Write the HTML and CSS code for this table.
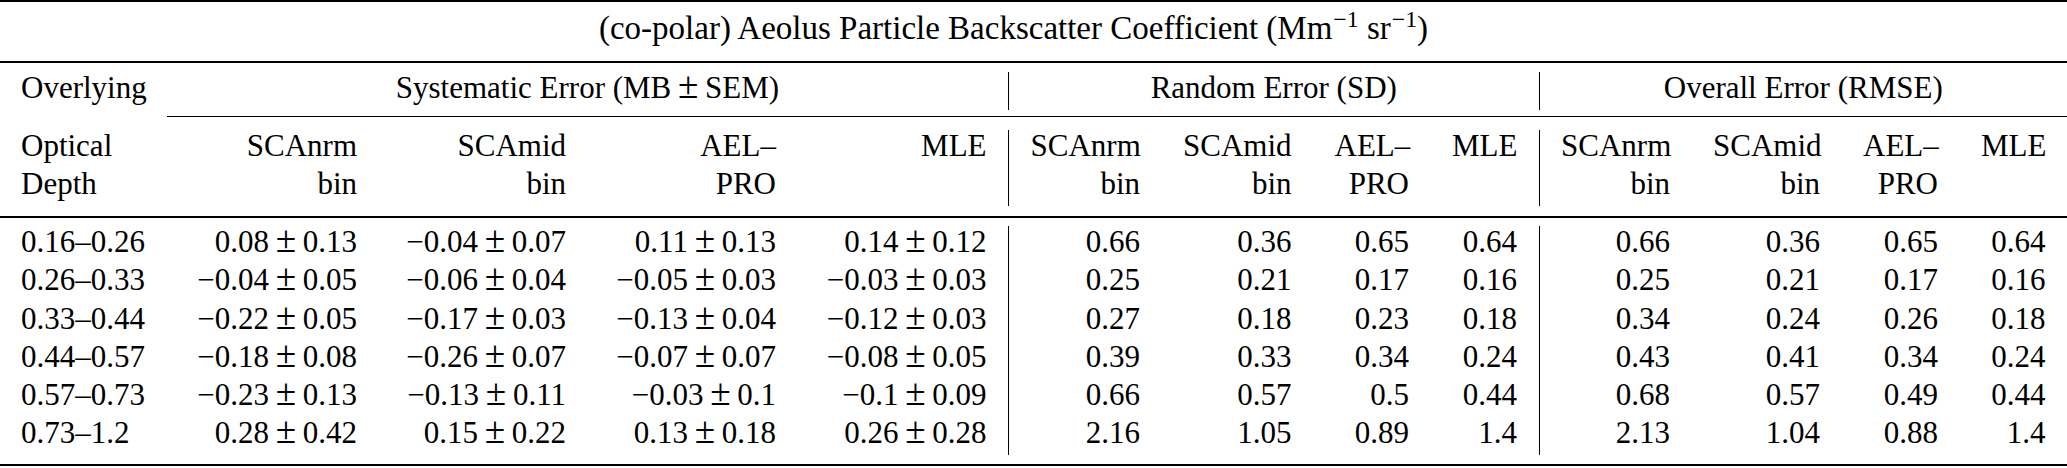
FILE: index.html
```html
<!DOCTYPE html>
<html lang="en">
<head>
<meta charset="utf-8">
<title>Aeolus Particle Backscatter Coefficient errors</title>
<link rel="stylesheet" href="styles.css">
</head>
<body>
<table class="tbl">
  <colgroup>
    <col class="w-stub">
    <col class="w-s1"><col class="w-s2"><col class="w-s3"><col class="w-s4">
    <col class="w-r1"><col class="w-r2"><col class="w-r3"><col class="w-r4">
    <col class="w-o1"><col class="w-o2"><col class="w-o3"><col class="w-o4">
  </colgroup>
  <tbody>
    <tr class="rule rule-heavy"><td colspan="13"></td></tr>
    <tr class="sp sp-a"><td colspan="13"></td></tr>
    <tr class="row"><td colspan="13" class="cap">(co-polar) Aeolus Particle Backscatter Coefficient (Mm<sup class="sup">−1</sup> sr<sup class="sup">−1</sup>)</td></tr>
    <tr class="sp sp-b"><td colspan="13"></td></tr>
    <tr class="rule rule-light"><td colspan="13"></td></tr>
    <tr class="sp sp-c"><td colspan="13"></td></tr>
    <tr class="row">
      <td class="stub">Overlying</td>
      <td colspan="4" class="span">Systematic Error (MB<span class="pm">±</span>SEM)</td>
      <td colspan="4" class="span bar">Random Error (SD)</td>
      <td colspan="4" class="span bar">Overall Error (RMSE)</td>
    </tr>
    <tr class="sp sp-d"><td colspan="13"></td></tr>
    <tr class="rule rule-cmid"><td class="blank"></td><td colspan="12"></td></tr>
    <tr class="sp sp-e"><td colspan="13"></td></tr>
    <tr class="row">
      <td class="stub">Optical</td>
      <td>SCAnrm</td><td>SCAmid</td><td>AEL–</td><td>MLE</td>
      <td class="bar">SCAnrm</td><td>SCAmid</td><td>AEL–</td><td>MLE</td>
      <td class="bar">SCAnrm</td><td>SCAmid</td><td>AEL–</td><td>MLE</td>
    </tr>
    <tr class="row">
      <td class="stub">Depth</td>
      <td>bin</td><td>bin</td><td>PRO</td><td></td>
      <td class="bar">bin</td><td>bin</td><td>PRO</td><td></td>
      <td class="bar">bin</td><td>bin</td><td>PRO</td><td></td>
    </tr>
    <tr class="sp sp-f"><td colspan="13"></td></tr>
    <tr class="rule rule-light"><td colspan="13"></td></tr>
    <tr class="sp sp-g"><td colspan="13"></td></tr>
    <tr class="row">
      <td class="stub">0.16–0.26</td>
      <td>0.08<span class="pm">±</span>0.13</td><td>−0.04<span class="pm">±</span>0.07</td><td>0.11<span class="pm">±</span>0.13</td><td>0.14<span class="pm">±</span>0.12</td>
      <td class="bar">0.66</td><td>0.36</td><td>0.65</td><td>0.64</td>
      <td class="bar">0.66</td><td>0.36</td><td>0.65</td><td>0.64</td>
    </tr>
    <tr class="row">
      <td class="stub">0.26–0.33</td>
      <td>−0.04<span class="pm">±</span>0.05</td><td>−0.06<span class="pm">±</span>0.04</td><td>−0.05<span class="pm">±</span>0.03</td><td>−0.03<span class="pm">±</span>0.03</td>
      <td class="bar">0.25</td><td>0.21</td><td>0.17</td><td>0.16</td>
      <td class="bar">0.25</td><td>0.21</td><td>0.17</td><td>0.16</td>
    </tr>
    <tr class="row">
      <td class="stub">0.33–0.44</td>
      <td>−0.22<span class="pm">±</span>0.05</td><td>−0.17<span class="pm">±</span>0.03</td><td>−0.13<span class="pm">±</span>0.04</td><td>−0.12<span class="pm">±</span>0.03</td>
      <td class="bar">0.27</td><td>0.18</td><td>0.23</td><td>0.18</td>
      <td class="bar">0.34</td><td>0.24</td><td>0.26</td><td>0.18</td>
    </tr>
    <tr class="row">
      <td class="stub">0.44–0.57</td>
      <td>−0.18<span class="pm">±</span>0.08</td><td>−0.26<span class="pm">±</span>0.07</td><td>−0.07<span class="pm">±</span>0.07</td><td>−0.08<span class="pm">±</span>0.05</td>
      <td class="bar">0.39</td><td>0.33</td><td>0.34</td><td>0.24</td>
      <td class="bar">0.43</td><td>0.41</td><td>0.34</td><td>0.24</td>
    </tr>
    <tr class="row">
      <td class="stub">0.57–0.73</td>
      <td>−0.23<span class="pm">±</span>0.13</td><td>−0.13<span class="pm">±</span>0.11</td><td>−0.03<span class="pm">±</span>0.1</td><td>−0.1<span class="pm">±</span>0.09</td>
      <td class="bar">0.66</td><td>0.57</td><td>0.5</td><td>0.44</td>
      <td class="bar">0.68</td><td>0.57</td><td>0.49</td><td>0.44</td>
    </tr>
    <tr class="row">
      <td class="stub">0.73–1.2</td>
      <td>0.28<span class="pm">±</span>0.42</td><td>0.15<span class="pm">±</span>0.22</td><td>0.13<span class="pm">±</span>0.18</td><td>0.26<span class="pm">±</span>0.28</td>
      <td class="bar">2.16</td><td>1.05</td><td>0.89</td><td>1.4</td>
      <td class="bar">2.13</td><td>1.04</td><td>0.88</td><td>1.4</td>
    </tr>
    <tr class="sp sp-h"><td colspan="13"></td></tr>
    <tr class="rule rule-heavy"><td colspan="13"></td></tr>
  </tbody>
</table>
</body>
</html>
```

FILE: styles.css
```css
html, body {
  margin: 0;
  padding: 0;
  background: #ffffff;
}

body {
  color: #000000;
  font-family: "Liberation Serif", "Times New Roman", serif;
  font-size: 31px;
}

.tbl {
  border-collapse: separate;
  border-spacing: 0;
  table-layout: fixed;
  width: 2067px;
}

.tbl td {
  padding: 0;
}

/* column widths */
.w-stub { width: 167px; }
.w-s1 { width: 211.5px; }
.w-s2 { width: 209px; }
.w-s3 { width: 210px; }
.w-s4 { width: 210.5px; }
.w-r1 { width: 153.5px; }
.w-r2 { width: 151.5px; }
.w-r3 { width: 117.5px; }
.w-r4 { width: 108px; }
.w-o1 { width: 153px; }
.w-o2 { width: 150px; }
.w-o3 { width: 118px; }
.w-o4 { width: 107.5px; }

/* text rows: 38.2px pitch, baseline 26.7px from the row top */
.row td {
  padding: 0 21.5px 5.7px 21.5px;
  line-height: 32.5px;
  text-align: right;
  white-space: nowrap;
  vertical-align: top;
}

.row td.stub {
  text-align: left;
  padding-left: 21px;
}

.row td.span {
  text-align: center;
}

.row td.bar {
  border-left: 1px solid #000000;
}

.row td.cap {
  text-align: center;
  font-size: 33px;
  padding-right: 61.5px;
}

.sup {
  font-size: 0.72em;
  line-height: 0;
  vertical-align: 0.5em;
  margin-left: 1px;
}

.pm {
  font-size: 1.2em;
  line-height: 0;
  margin: 0 0.18em;
}

/* rules */
.rule td {
  background: #000000;
}

.rule td.blank {
  background: transparent;
}

.rule-heavy td { height: 2px; }
.rule-light td { height: 1.5px; }
.rule-cmid td { height: 1px; }

/* vertical gaps around rules */
.sp-a td { height: 10px; }
.sp-b td { height: 11px; }
.sp-c td { height: 9.5px; }
.sp-d td { height: 5.8px; }
.sp-e td { height: 12.6px; }
.sp-f td { height: 10px; }
.sp-g td { height: 8.5px; }
.sp-h td { height: 8.8px; }
```
